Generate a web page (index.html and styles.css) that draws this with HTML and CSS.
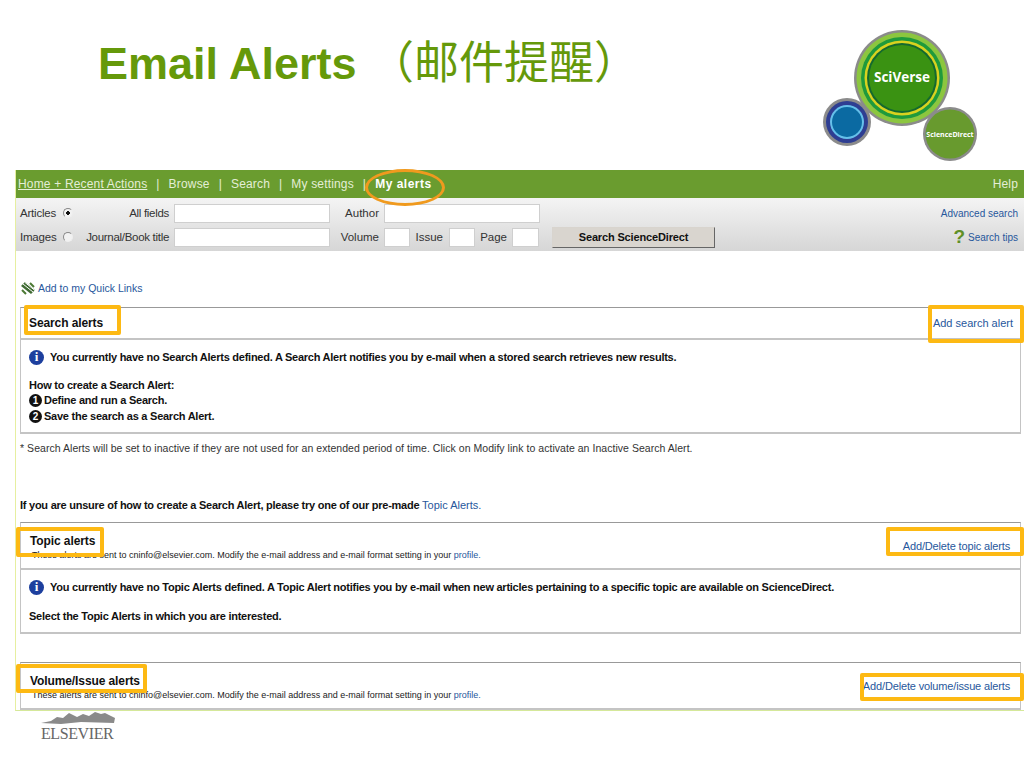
FILE: index.html
```html
<!DOCTYPE html>
<html lang="en">

<head>
    <meta charset="UTF-8" />
    <title>Email Alerts</title>
    <link rel="stylesheet" href="styles.css">
</head>

<body>
    <div class="slide">
        <div class="slide-header">
            <h1 class="slide-title">Email Alerts <span class="cjk">（邮件提醒）</span></h1>
            <svg class="sciverse-logo" width="160" height="140" viewBox="0 0 160 140">
                <circle cx="82" cy="53" r="48" fill="#8b8b8b" />
                <circle cx="82" cy="53" r="45.5" fill="#8cc63f" />
                <circle cx="82" cy="53" r="41" fill="#1f9a3c" />
                <circle cx="82" cy="53" r="37.5" fill="#d8d21f" />
                <circle cx="82" cy="53" r="35" fill="#14692f" />
                <circle cx="82" cy="53" r="33" fill="#3a9212" />
                <text x="82" y="57" class="logo-big">SciVerse</text>
                <circle cx="27" cy="97" r="24" fill="#8b8b8b" />
                <circle cx="27" cy="97" r="21" fill="#2e3e92" />
                <circle cx="27" cy="97" r="17" fill="#66c0ea" />
                <circle cx="27" cy="97" r="15" fill="#0b6aa2" />
                <circle cx="130" cy="109" r="27" fill="#8b8b8b" />
                <circle cx="130" cy="109" r="24.5" fill="#689a2e" />
                <text x="130" y="112" class="logo-small">ScienceDirect</text>
            </svg>
        </div>

        <div class="screen">
            <div class="nav-bar">
                <a class="nav-link nav-home">Home + Recent Actions</a>
                <span class="nav-sep">|</span>
                <a class="nav-link">Browse</a>
                <span class="nav-sep">|</span>
                <a class="nav-link">Search</a>
                <span class="nav-sep">|</span>
                <a class="nav-link">My settings</a>
                <span class="nav-sep">|</span>
                <a class="nav-link nav-active">My alerts</a>
                <a class="nav-link nav-help">Help</a>
            </div>

            <div class="search-bar">
                <div class="form-row">
                    <span class="type-label">Articles</span>
                    <input class="type-radio" type="radio" name="kind" checked>
                    <span class="field-label label-main">All fields</span>
                    <input class="field field-wide" type="text">
                    <span class="field-label label-author">Author</span>
                    <input class="field field-wide" type="text">
                    <a class="side-link">Advanced search</a>
                </div>
                <div class="form-row">
                    <span class="type-label">Images</span>
                    <input class="type-radio" type="radio" name="kind">
                    <span class="field-label label-main">Journal/Book title</span>
                    <input class="field field-wide" type="text">
                    <span class="field-label label-author">Volume</span>
                    <input class="field field-small" type="text">
                    <span class="field-label label-issue">Issue</span>
                    <input class="field field-small" type="text">
                    <span class="field-label label-page">Page</span>
                    <input class="field field-page" type="text">
                    <button class="search-btn">Search ScienceDirect</button>
                    <a class="side-link"><span class="help-mark">?</span> Search tips</a>
                </div>
            </div>

            <div class="content">
                <div class="quick-links">
                    <svg width="16" height="16" viewBox="0 0 16 16">
                        <path d="M1 6 L5 2 L15 10 L11 14 Z" fill="#3f6b33" />
                        <path d="M3 4 L13 12 M5 2.500 L15 10.500" stroke="#fff" stroke-width="1" />
                        <path d="M6 14 L2 10 M10 3 L14 7" stroke="#4d7a35" stroke-width="2" />
                    </svg>
                    <a class="link">Add to my Quick Links</a>
                </div>

                <div class="alert-box">
                    <div class="box-head head-search">
                        <span class="box-title">Search alerts</span>
                        <a class="link box-link">Add search alert</a>
                    </div>
                    <div class="box-body body-search">
                        <p class="info-line">
                            <span class="info-icon">i</span>
                            You currently have no Search Alerts defined. A Search Alert notifies you by e-mail when a stored search retrieves new results.
                        </p>
                        <p class="how-title">How to create a Search Alert:</p>
                        <p class="how-step"><span class="step-num">1</span>Define and run a Search.</p>
                        <p class="how-step"><span class="step-num">2</span>Save the search as a Search Alert.</p>
                    </div>
                </div>

                <p class="footnote">* Search Alerts will be set to inactive if they are not used for an extended period of time. Click on Modify link to activate an Inactive Search Alert.</p>
                <p class="unsure">If you are unsure of how to create a Search Alert, please try one of our pre-made <a class="link link-plain">Topic Alerts.</a></p>

                <div class="alert-box">
                    <div class="box-head head-topic">
                        <div>
                            <div class="box-title">Topic alerts</div>
                            <div class="box-note">These alerts are sent to cninfo@elsevier.com. Modify the e-mail address and e-mail format setting in your <a class="link">profile.</a></div>
                        </div>
                        <a class="link box-link">Add/Delete topic alerts</a>
                    </div>
                    <div class="box-body body-topic">
                        <p class="info-line">
                            <span class="info-icon">i</span>
                            You currently have no Topic Alerts defined. A Topic Alert notifies you by e-mail when new articles pertaining to a specific topic are available on ScienceDirect.
                        </p>
                        <p class="how-title select-line">Select the Topic Alerts in which you are interested.</p>
                    </div>
                </div>

                <div class="alert-box box-volume">
                    <div class="box-head head-topic">
                        <div>
                            <div class="box-title">Volume/Issue alerts</div>
                            <div class="box-note">These alerts are sent to cninfo@elsevier.com. Modify the e-mail address and e-mail format setting in your <a class="link">profile.</a></div>
                        </div>
                        <a class="link box-link">Add/Delete volume/issue alerts</a>
                    </div>
                </div>
            </div>
        </div>

        <div class="elsevier">
            <svg width="74" height="12" viewBox="0 0 74 12">
                <path d="M0 11 L10 9 L16 5 L22 6 L28 1 L36 5 L42 2 L48 4 L54 0 L60 2 L64 1 L70 4 L74 6 L73 11 L40 10 L20 12 Z" fill="#8a8a8a" />
            </svg>
            <div class="elsevier-name">ELSEVIER</div>
        </div>

        <!-- orange marks drawn over the screenshot -->
        <div class="mark mark-ellipse"></div>
        <div class="mark mark-search"></div>
        <div class="mark mark-add-search"></div>
        <div class="mark mark-topic"></div>
        <div class="mark mark-add-topic"></div>
        <div class="mark mark-volume"></div>
        <div class="mark mark-add-volume"></div>
    </div>
</body>

</html>
```

FILE: styles.css
```css
body {
    margin: 0;
    background-color: #fff;
    font-family: 'Liberation Sans', Arial, sans-serif;
}

.slide {
    position: relative;
    width: 1024px;
    height: 768px;
    overflow: hidden;
}

/* Title and logo */
.slide-header {
    display: flex;
    height: 170px;
    padding-left: 98px;
}

.slide-title {
    margin: 37px 0 0;
    font-size: 45px;
    line-height: 53px;
    font-weight: bold;
    color: #65990a;
    white-space: nowrap;
}

.slide-title .cjk {
    font-family: 'Liberation Sans', 'Noto Sans CJK SC', sans-serif;
    font-weight: normal;
}

.sciverse-logo {
    margin: 25px 44px 0 auto;
}

.logo-big {
    font-family: 'Open Sans', sans-serif;
    font-size: 13.500px;
    font-weight: bold;
    fill: #fff;
    text-anchor: middle;
}

.logo-small {
    font-family: 'Open Sans', sans-serif;
    font-size: 7px;
    font-weight: bold;
    fill: #fff;
    text-anchor: middle;
}

/* The pasted web page */
.screen {
    height: 541px;
    margin-left: 15px;
    border-left: 1px solid #e6efa0;
    border-bottom: 1px solid #d5e89a;
    overflow: hidden;
    box-sizing: border-box;
}

.nav-bar {
    display: flex;
    align-items: center;
    height: 28px;
    padding: 0 6px 0 2px;
    background-color: #6a9c2f;
    font-size: 12px;
    letter-spacing: 0.17px;
    color: #e4eed6;
}

.nav-link {
    color: #e4eed6;
}

.nav-home {
    text-decoration: underline;
}

.nav-sep {
    margin: 0 9px;
}

.nav-active {
    font-weight: bold;
    letter-spacing: 0.5px;
    color: #fff;
}

.nav-help {
    margin-left: auto;
    font-weight: normal;
}

.search-bar {
    height: 53px;
    padding: 3px 6px 0 4px;
    box-sizing: border-box;
    background: linear-gradient(#f4f4f4, #d6d6d6);
    font-size: 11.500px;
    color: #333;
}

.form-row {
    display: flex;
    align-items: center;
    height: 24px;
}

.type-label {
    width: 40px;
    letter-spacing: -0.2px;
}

.type-radio {
    appearance: none;
    width: 10px;
    height: 10px;
    margin: 0 2px 0 3px;
    border: 1px solid #888;
    border-right-color: #eee;
    border-bottom-color: #eee;
    border-radius: 50%;
    background-color: #f2f2f2;
}

.type-radio:checked {
    background: radial-gradient(circle 2px, #111 90%, #f2f2f2 100%);
}

.field-label {
    margin-right: 5px;
    text-align: right;
    white-space: nowrap;
}

.label-main {
    width: 94px;
    letter-spacing: -0.3px;
}

.label-author {
    width: 49px;
}

.label-issue {
    width: 33px;
    margin-right: 6px;
}

.label-page {
    width: 32px;
}

.field {
    height: 19px;
    padding: 0;
    box-sizing: border-box;
    border: 1px solid #cfcfcf;
    background-color: #fff;
}

.field-wide {
    width: 156px;
}

.field-small {
    width: 26px;
}

.field-page {
    width: 27px;
}

.search-btn {
    width: 163px;
    height: 21px;
    margin-left: 13px;
    padding: 0;
    border: 1px solid #d8d4ce;
    border-right-color: #666;
    border-bottom-color: #666;
    background-color: #d9d5cf;
    font-family: 'Liberation Sans', Arial, sans-serif;
    font-size: 11px;
    font-weight: bold;
    letter-spacing: -0.15px;
    color: #111;
}

.side-link {
    margin-left: auto;
    font-size: 10px;
    color: #27579c;
}

.help-mark {
    font-size: 19px;
    font-weight: bold;
    color: #5f8f26;
    vertical-align: -2px;
}

.content {
    padding: 29px 3px 0 4px;
}

.quick-links {
    display: flex;
    align-items: center;
    gap: 2px;
    height: 16px;
    margin-bottom: 11px;
    font-size: 10.500px;
}

.link {
    color: #27579c;
}

/* Alert boxes */
.alert-box {
    border: 1px solid #c4c4c4;
    border-top-color: #999;
    border-bottom-width: 2px;
}

.box-head {
    display: flex;
    justify-content: space-between;
    box-sizing: border-box;
    border-bottom: 2px solid #c4c4c4;
}

.head-search {
    align-items: center;
    height: 32px;
    padding: 0 7px 0 8px;
}

.head-topic {
    height: 47px;
    padding: 11px 10px 0 9px;
}

.box-title {
    font-size: 12px;
    font-weight: bold;
    line-height: 14px;
    letter-spacing: -0.1px;
    color: #111;
}

.box-note {
    margin-top: 1px;
    padding-left: 2px;
    font-size: 9px;
    line-height: 12px;
    color: #222;
}

.box-link {
    font-size: 11px;
    line-height: 14px;
}

.head-topic .box-link {
    margin-top: 5px;
    letter-spacing: -0.15px;
}

.box-body {
    padding: 0 8px;
    font-size: 11px;
    font-weight: bold;
    letter-spacing: -0.25px;
    color: #111;
}

.body-search {
    height: 92px;
    padding-top: 9px;
    box-sizing: border-box;
}

.body-topic {
    height: 62px;
    padding-top: 9px;
    box-sizing: border-box;
}

.box-body p {
    margin: 0;
}

.info-line {
    display: flex;
    align-items: center;
    gap: 6px;
    height: 16px;
}

.info-icon {
    display: flex;
    justify-content: center;
    align-items: center;
    flex-shrink: 0;
    width: 15px;
    height: 15px;
    border-radius: 50%;
    background-color: #1d3f9e;
    font-family: 'Liberation Serif', serif;
    font-size: 13px;
    color: #fff;
}

.box-body .how-title {
    margin-top: 13px;
    line-height: 15px;
}

.box-body .select-line {
    margin-top: 14px;
}

.how-step {
    display: flex;
    align-items: center;
    gap: 2px;
    height: 15.500px;
    line-height: 15px;
}

.step-num {
    flex-shrink: 0;
    width: 13px;
    height: 13px;
    border-radius: 50%;
    background-color: #111;
    font-size: 10px;
    line-height: 13px;
    letter-spacing: 0;
    text-align: center;
    color: #fff;
}

.footnote {
    margin: 7px 0 0;
    font-size: 10.500px;
    line-height: 14px;
    letter-spacing: 0.04px;
    color: #333;
}

.unsure {
    margin: 43px 0 10px;
    font-size: 11px;
    line-height: 14px;
    font-weight: bold;
    letter-spacing: -0.25px;
    color: #111;
}

.link-plain {
    font-weight: normal;
    letter-spacing: 0;
}

.box-volume {
    margin-top: 28px;
    border-bottom: none;
}

/* Elsevier logo under the screenshot */
.elsevier {
    margin: 1px 0 0 41px;
}

.elsevier svg {
    display: block;
}

.elsevier-name {
    margin-top: 1px;
    font-family: 'Liberation Serif', serif;
    font-size: 16px;
    line-height: 18px;
    letter-spacing: -0.4px;
    color: #666;
}

/* Orange marks */
.mark {
    position: absolute;
    box-sizing: border-box;
    border: 4px solid #fdb913;
    border-radius: 2px;
}

.mark-ellipse {
    left: 365px;
    top: 169px;
    width: 80px;
    height: 37px;
    border: 3px solid #f09a1e;
    border-radius: 50%;
}

.mark-search {
    left: 24px;
    top: 305px;
    width: 97px;
    height: 30px;
}

.mark-add-search {
    left: 928px;
    top: 305px;
    width: 96px;
    height: 38px;
}

.mark-topic {
    left: 16px;
    top: 527px;
    width: 88px;
    height: 30px;
}

.mark-add-topic {
    left: 886px;
    top: 527px;
    width: 138px;
    height: 29px;
}

.mark-volume {
    left: 16px;
    top: 664px;
    width: 131px;
    height: 29px;
}

.mark-add-volume {
    left: 860px;
    top: 673px;
    width: 164px;
    height: 28px;
}
```
